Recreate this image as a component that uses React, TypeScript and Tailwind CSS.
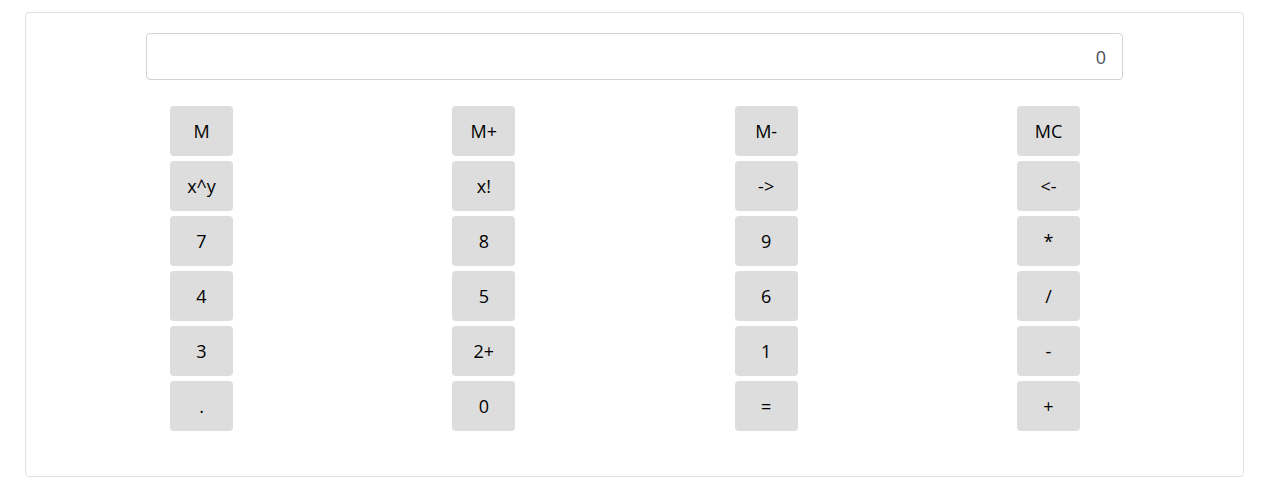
const rows: string[][] = [
  ['M', 'M+', 'M-', 'MC'],
  ['x^y', 'x!', '->', '<-'],
  ['7', '8', '9', '*'],
  ['4', '5', '6', '/'],
  ['3', '2+', '1', '-'],
  ['.', '0', '=', '+'],
];

export default function App() {
  return (
    <div className="min-h-screen bg-white pt-3 px-[25px] pr-[27px]" style={{ fontFamily: '"Open Sans", "Noto Sans", sans-serif' }}>
      {/* Calculator card */}
      <div className="border border-[#dee2e6] rounded-[4px] pt-5 pb-[45px]">
        <div className="mx-[120px]">
          <input
            readOnly
            value="0"
            className="w-full h-[47px] border border-[#ced4da] rounded-[4px] px-4 text-right text-lg text-[#495057] outline-none"
          />
        </div>

        <div className="mt-[26px] mx-[144px] w-[910px] flex flex-col gap-[5px]">
          {rows.map((row, i) => (
            <div key={i} className="flex justify-between">
              {row.map((label) => (
                <button
                  key={label}
                  className="w-[63px] h-[50px] bg-[#dddddd] rounded-[4px] text-lg text-black"
                >
                  {label}
                </button>
              ))}
            </div>
          ))}
        </div>
      </div>
    </div>
  );
}
